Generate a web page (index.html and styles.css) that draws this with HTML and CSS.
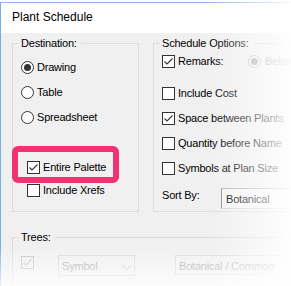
FILE: index.html
```html
<!DOCTYPE html>
<html>
<head>
<meta charset="utf-8">
<link rel="stylesheet" href="styles.css">
</head>
<body>
<div class="window">
  <div class="titlebar">Plant Schedule</div>
  <div class="client">
    <div class="top-row">
      <fieldset class="group dest">
        <legend>Destination:</legend>
        <div class="inner dest-inner">
          <div class="row"><span class="radio checked"></span>Drawing</div>
          <div class="row"><span class="radio"></span>Table</div>
          <div class="row"><span class="radio"></span>Spreadsheet</div>
          <div class="sub">
            <div class="crow"><span class="check"><svg viewBox="0 0 11 11" width="11" height="11"><polyline points="1.5,5.5 4,8 9.5,2.5"/></svg></span>Entire Palette</div>
            <div class="crow"><span class="check"></span>Include Xrefs</div>
          </div>
        </div>
      </fieldset>
      <fieldset class="group sched">
        <legend>Schedule Options:</legend>
        <div class="inner sched-inner">
          <div class="row first">
            <span class="remarks"><span class="check"><svg viewBox="0 0 11 11" width="11" height="11"><polyline points="1.5,5.5 4,8 9.5,2.5"/></svg></span>Remarks:</span>
            <span class="radio disabled checked"></span><span class="dis-text">Below</span>
          </div>
          <div class="row cost"><span class="check"></span>Include Cost</div>
          <div class="row"><span class="check"><svg viewBox="0 0 11 11" width="11" height="11"><polyline points="1.5,5.5 4,8 9.5,2.5"/></svg></span>Space between Plants</div>
          <div class="row"><span class="check"></span>Quantity before Name</div>
          <div class="row"><span class="check"></span>Symbols at Plan Size</div>
          <div class="sort-row">
            <span class="sort-label">Sort By:</span>
            <span class="combo">Botanical</span>
          </div>
        </div>
      </fieldset>
    </div>
    <fieldset class="group trees">
      <legend>Trees:</legend>
      <div class="inner trees-inner">
        <span class="check disabled"><svg viewBox="0 0 11 11" width="11" height="11"><polyline points="1.5,5.5 4,8 9.5,2.5"/></svg></span>
        <span class="combo dis symbol"><span>Symbol</span><svg class="chev" viewBox="0 0 9 5" width="9" height="5"><polyline points="0.5,0.5 4.5,4.5 8.5,0.5"/></svg></span>
        <span class="combo dis botan">Botanical / Common</span>
      </div>
    </fieldset>
  </div>
  <div class="annot"></div>
</div>
<div class="fade"></div>
</body>
</html>
```

FILE: styles.css
```css
html, body {
  margin: 0;
  padding: 0;
}
body {
  position: relative;
  width: 291px;
  height: 286px;
  overflow: hidden;
  background: #fff;
  font-family: "Liberation Sans", Arial, sans-serif;
  color: #000;
}
.window {
  position: relative;
  margin-top: 2px;
  height: 284px;
  box-sizing: border-box;
  border-left: 1px solid #7aaee8;
  border-top: 1px solid #8dbbee;
  background: #f0f0f0;
  overflow: hidden;
}
.titlebar {
  height: 30px;
  box-sizing: border-box;
  background: #fff;
  padding: 7px 0 0 11px;
  font-size: 12px;
  line-height: 14px;
}
.client {
  padding: 4px 0 0 11px;
  font-size: 11px;
  line-height: 13px;
  letter-spacing: -0.2px;
}
.top-row {
  display: flex;
  gap: 14px;
  align-items: stretch;
}
.group {
  margin: 0;
  padding: 0;
  border: 1px solid #dcdcdc;
  min-width: 0;
}
.group legend {
  margin-left: 6px;
  padding: 0 4px 0 2px;
  font-size: 11px;
  line-height: 13px;
}
.dest {
  width: 127px;
  box-sizing: border-box;
  flex: 0 0 auto;
}
.sched {
  width: 170px;
  box-sizing: border-box;
  flex: 0 0 auto;
}
.inner {
  padding-left: 8px;
}
.dest-inner {
  padding-top: 5px;
}
.row {
  display: flex;
  align-items: center;
  height: 25px;
  white-space: nowrap;
}
.sched-inner .row.first {
  height: 22px;
}
.sched-inner .row.cost {
  margin-top: 9px;
}
.sub {
  margin-top: 26px;
  padding-left: 6px;
}
.crow {
  display: flex;
  align-items: center;
  height: 23px;
  white-space: nowrap;
}
.radio {
  width: 13px;
  height: 13px;
  box-sizing: border-box;
  border: 1px solid #333;
  border-radius: 50%;
  background: #fff;
  margin-right: 3px;
  display: flex;
  align-items: center;
  justify-content: center;
  flex: 0 0 auto;
}
.radio.checked::after {
  content: "";
  width: 7px;
  height: 7px;
  border-radius: 50%;
  background: #333;
}
.radio.disabled {
  border-color: #bcbcbc;
  background: #f6f6f6;
  margin-right: 4px;
}
.radio.disabled.checked::after {
  background: #ababab;
}
.check {
  width: 13px;
  height: 13px;
  box-sizing: border-box;
  border: 1px solid #333;
  background: #fff;
  margin-right: 3px;
  flex: 0 0 auto;
  display: block;
}
.check svg {
  display: block;
}
.check polyline {
  fill: none;
  stroke: #333;
  stroke-width: 1.1;
}
.check.disabled {
  border-color: #c4c4c4;
  background: #f0f0f0;
}
.check.disabled polyline {
  stroke: #c4c4c4;
}
.remarks {
  display: flex;
  align-items: center;
  width: 86px;
  flex: 0 0 auto;
}
.dis-text {
  color: #a3a3a3;
}
.sort-row {
  display: flex;
  align-items: flex-start;
  margin-top: 7px;
  padding-bottom: 2px;
}
.sort-label {
  width: 59px;
  flex: 0 0 auto;
  padding-top: 1px;
}
.combo {
  display: block;
  height: 21px;
  box-sizing: border-box;
  padding: 4px 0 0 4px;
  width: 110px;
  flex: 0 0 auto;
  border: 1px solid #b4b4b4;
  border-left-color: #8c8c8c;
  border-bottom-color: #d6d6d6;
  background: #f4f4f4;
  white-space: nowrap;
}
.trees {
  margin-top: 19px;
  width: 300px;
  height: 80px;
  box-sizing: border-box;
}
.trees-inner {
  display: flex;
  align-items: flex-start;
  padding-top: 11px;
}
.trees-inner .check {
  margin-top: 1px;
  margin-right: 0;
}
.combo.dis {
  border: 1px solid #d9d9d9;
  background: #f0f0f0;
  color: #a6a6a6;
  padding-left: 3px;
}
.symbol {
  width: 77px;
  margin-left: 24px;
  display: flex;
  justify-content: space-between;
  align-items: flex-start;
  padding-right: 3px;
}
.chev {
  margin-top: 5px;
}
.chev polyline {
  fill: none;
  stroke: #c2c2c2;
  stroke-width: 1;
}
.botan {
  width: 140px;
  height: 20px;
  margin-left: 40px;
  padding-left: 4px;
  background: #f4f4f4;
}
.annot {
  position: absolute;
  left: 11px;
  top: 143px;
  width: 107px;
  height: 37px;
  box-sizing: border-box;
  border: 6px solid #ef3370;
  border-radius: 6px;
}
.fade {
  position: absolute;
  inset: 0;
  pointer-events: none;
  background:
    linear-gradient(to right, rgba(255,255,255,0) 72%, rgba(255,255,255,0.5) 88%, rgba(255,255,255,0.92) 100%),
    linear-gradient(to bottom, rgba(255,255,255,0) 86%, rgba(255,255,255,0.8) 100%);
}
```
